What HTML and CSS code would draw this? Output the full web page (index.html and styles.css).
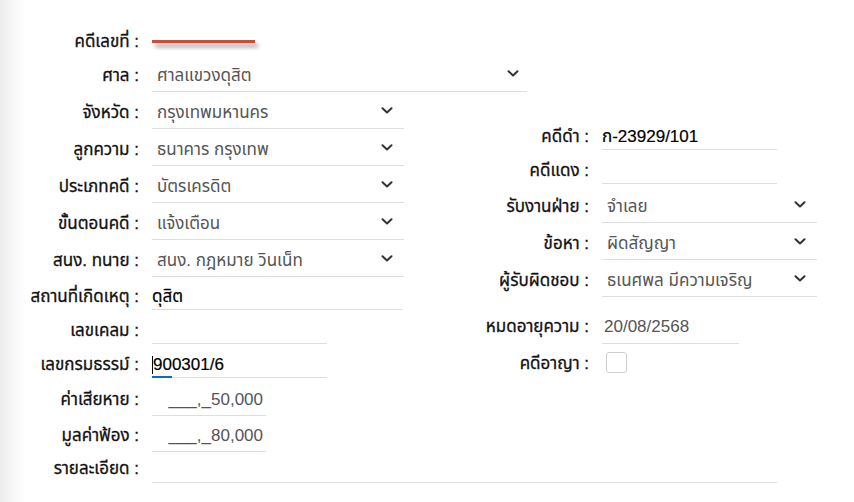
FILE: index.html
```html
<!DOCTYPE html>
<html lang="th">
<head>
<meta charset="utf-8">
<title>Case form</title>
<link rel="stylesheet" href="styles.css">
</head>
<body>
<div class="page">
  <div class="row h55 top">
    <label class="lbl">คดีเลขที่ :</label>
    <div class="redline"></div>
  </div>
  <div class="row h37 sel">
    <label class="lbl">ศาล :</label>
    <div class="field w375 select"><span class="val">ศาลแขวงดุสิต</span><svg class="chev wide" viewBox="0 0 12 7" width="12" height="7"><polyline points="1.5,1.2 6,5.5 10.5,1.2"/></svg></div>
  </div>
  <div class="cols">
    <div class="col left">
      <div class="row h37 sel">
        <label class="lbl">จังหวัด :</label>
        <div class="field w252 select"><span class="val">กรุงเทพมหานคร</span><svg class="chev" viewBox="0 0 12 7" width="12" height="7"><polyline points="1.5,1.2 6,5.5 10.5,1.2"/></svg></div>
      </div>
      <div class="row h37 sel">
        <label class="lbl">ลูกความ :</label>
        <div class="field w252 select"><span class="val">ธนาคาร กรุงเทพ</span><svg class="chev" viewBox="0 0 12 7" width="12" height="7"><polyline points="1.5,1.2 6,5.5 10.5,1.2"/></svg></div>
      </div>
      <div class="row h37 sel">
        <label class="lbl">ประเภทคดี :</label>
        <div class="field w252 select"><span class="val">บัตรเครดิต</span><svg class="chev" viewBox="0 0 12 7" width="12" height="7"><polyline points="1.5,1.2 6,5.5 10.5,1.2"/></svg></div>
      </div>
      <div class="row h37 sel">
        <label class="lbl">ขั้นตอนคดี :</label>
        <div class="field w252 select"><span class="val">แจ้งเตือน</span><svg class="chev" viewBox="0 0 12 7" width="12" height="7"><polyline points="1.5,1.2 6,5.5 10.5,1.2"/></svg></div>
      </div>
      <div class="row h37 sel">
        <label class="lbl">สนง. ทนาย :</label>
        <div class="field w252 select"><span class="val">สนง. กฎหมาย วินเน็ท</span><svg class="chev" viewBox="0 0 12 7" width="12" height="7"><polyline points="1.5,1.2 6,5.5 10.5,1.2"/></svg></div>
      </div>
      <div class="row h33 inp">
        <label class="lbl">สถานที่เกิดเหตุ :</label>
        <div class="field w250"><span class="val dark">ดุสิต</span></div>
      </div>
      <div class="row h34 inp">
        <label class="lbl">เลขเคลม :</label>
        <div class="field w175"></div>
      </div>
      <div class="row h34 inp">
        <label class="lbl">เลขกรมธรรม์ :</label>
        <div class="field w175 focus"><span class="caret"></span><span class="val dark">900301/6</span></div>
      </div>
      <div class="row h38 sel">
        <label class="lbl">ค่าเสียหาย :</label>
        <div class="field w114 money"><span class="val num">___,_50,000</span></div>
      </div>
      <div class="row h36 sel">
        <label class="lbl">มูลค่าฟ้อง :</label>
        <div class="field w114 money"><span class="val num">___,_80,000</span></div>
      </div>
    </div>
    <div class="col right">
      <div class="row h34 inp">
        <label class="lbl">คดีดำ :</label>
        <div class="field w175"><span class="val dark">ก-23929/101</span></div>
      </div>
      <div class="row h34 inp">
        <label class="lbl">คดีแดง :</label>
        <div class="field w175"></div>
      </div>
      <div class="row h39 sel">
        <label class="lbl">รับงานฝ่าย :</label>
        <div class="field w215 select"><span class="val">จำเลย</span><svg class="chev" viewBox="0 0 12 7" width="12" height="7"><polyline points="1.5,1.2 6,5.5 10.5,1.2"/></svg></div>
      </div>
      <div class="row h37 sel">
        <label class="lbl">ข้อหา :</label>
        <div class="field w215 select"><span class="val">ผิดสัญญา</span><svg class="chev" viewBox="0 0 12 7" width="12" height="7"><polyline points="1.5,1.2 6,5.5 10.5,1.2"/></svg></div>
      </div>
      <div class="row h37 sel">
        <label class="lbl">ผู้รับผิดชอบ :</label>
        <div class="field w215 select"><span class="val">ธเนศพล มีความเจริญ</span><svg class="chev" viewBox="0 0 12 7" width="12" height="7"><polyline points="1.5,1.2 6,5.5 10.5,1.2"/></svg></div>
      </div>
      <div class="row h47 date">
        <label class="lbl">หมดอายุความ :</label>
        <div class="field w137"><span class="val num">20/08/2568</span></div>
      </div>
      <div class="row h34 chk">
        <label class="lbl">คดีอาญา :</label>
        <span class="checkbox"></span>
      </div>
    </div>
  </div>
  <div class="row h31 inp mid">
    <label class="lbl">รายละเอียด :</label>
    <div class="field w625"></div>
  </div>
</div>
</body>
</html>
```

FILE: styles.css
```css
html, body {
  margin: 0;
  padding: 0;
  background: #fff;
}
body {
  width: 854px;
  height: 502px;
  overflow: hidden;
  background: linear-gradient(to right, #ececec 0, #f6f6f6 12px, #ffffff 26px);
  font-family: Tahoma, "Liberation Sans", "Noto Sans Thai", "Noto Sans Thai UI", "Noto Sans", sans-serif;
  font-size: 17px;
  color: #222;
}
.page {
  display: flex;
  flex-direction: column;
}
.row {
  --pb: 3px;
  display: flex;
  align-items: flex-end;
}
.row.sel { --pb: 5px; }
.row.inp { --pb: 2px; }
.row.mid { --pb: 3px; }
.row.date { --pb: 6px; }
.h31 { height: 31px; }
.h33 { height: 33px; }
.h34 { height: 34px; }
.h36 { height: 36px; }
.h37 { height: 37px; }
.h38 { height: 38px; }
.h39 { height: 39px; }
.h47 { height: 47px; }
.h55 { height: 55px; }

.lbl {
  flex: none;
  width: 139px;
  margin-right: 13px;
  text-align: right;
  line-height: 20px;
  padding-bottom: calc(var(--pb) + 1px);
  white-space: nowrap;
  color: #111;
  -webkit-text-stroke: 0.3px #111;
}
.right .lbl {
  width: 169px;
}
.top .lbl {
  padding-bottom: 3px;
}
.field {
  flex: none;
  box-sizing: border-box;
  height: 100%;
  display: flex;
  align-items: flex-end;
  padding-bottom: var(--pb);
  border-bottom: 1px solid #dedede;
  line-height: 20px;
  position: relative;
}
.w114 { width: 114px; }
.w137 { width: 137px; }
.w175 { width: 175px; }
.w215 { width: 215px; }
.w250 { width: 250px; }
.w252 { width: 252px; }
.w375 { width: 375px; }
.w625 { width: 625px; }

.val {
  white-space: nowrap;
  color: #555;
}
.val.dark {
  color: #000;
  -webkit-text-stroke: 0.2px #000;
}
.val.num {
  font-family: "Liberation Sans", Arial, sans-serif;
  font-size: 17px;
  color: #555;
}
.select .val {
  padding-left: 5px;
  flex: 1;
}
.money {
  justify-content: flex-end;
  padding-right: 3px;
}
.right .field .val.num {
  padding-left: 2px;
}
.chev {
  flex: none;
  margin-right: 11px;
  margin-bottom: 9px;
}
.chev.wide {
  margin-right: 8px;
}
.chev polyline {
  fill: none;
  stroke: #333;
  stroke-width: 2;
  stroke-linecap: round;
  stroke-linejoin: round;
}
.redline {
  width: 103px;
  height: 3px;
  background: #c4503a;
  margin-bottom: 12px;
  box-shadow: 3px 4px 4px rgba(0, 0, 0, 0.4);
}
.focus::after {
  content: "";
  position: absolute;
  left: 0;
  bottom: -1px;
  width: 20px;
  height: 2px;
  background: #0a6fc2;
}
.caret {
  width: 1px;
  height: 18px;
  background: #000;
  margin-bottom: 1px;
  flex: none;
}
.cols {
  display: flex;
}
.col.left {
  width: 420px;
}
.col.right {
  padding-top: 24px;
}
.chk .lbl {
  padding-bottom: 4px;
}
.checkbox {
  display: block;
  width: 19px;
  height: 19px;
  border: 1px solid #cfcfcf;
  border-radius: 3px;
  margin-left: 4px;
  margin-bottom: 5px;
  background: #fff;
}
```
